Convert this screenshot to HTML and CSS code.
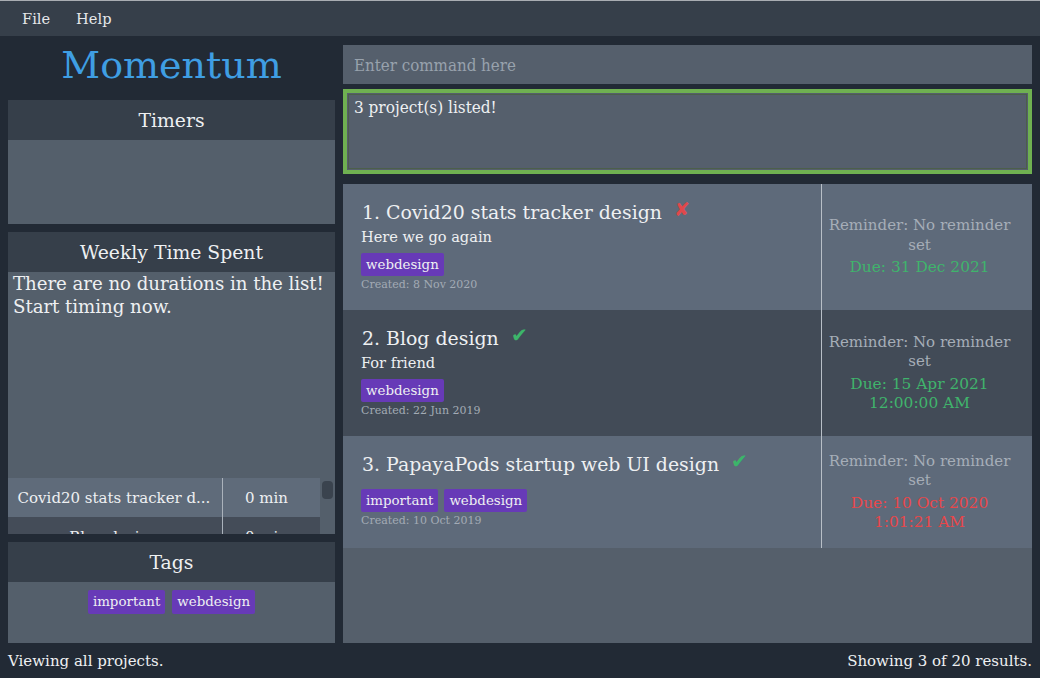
FILE: index.html
```html
<!DOCTYPE html>
<html>
<head>
<meta charset="utf-8">
<link rel="stylesheet" href="styles.css">
</head>
<body>
<div class="app">
  <div class="menubar">
    <span class="menu-item">File</span>
    <span class="menu-item">Help</span>
  </div>
  <div class="main">
    <div class="left">
      <div class="brand">Momentum</div>
      <div class="panel timers">
        <div class="panel-head">Timers</div>
        <div class="panel-body"></div>
      </div>
      <div class="panel weekly">
        <div class="panel-head">Weekly Time Spent</div>
        <div class="panel-body weekly-body">
          <div class="weekly-msg">There are no durations in the list! Start timing now.</div>
          <div class="table-wrap">
            <div class="table">
              <div class="trow light"><div class="tname">Covid20 stats tracker d...</div><div class="tdur">0 min</div></div>
              <div class="trow dark"><div class="tname">Blog design</div><div class="tdur">0 min</div></div>
            </div>
            <div class="scroll"><div class="thumb"></div></div>
          </div>
        </div>
      </div>
      <div class="panel tagsp">
        <div class="panel-head">Tags</div>
        <div class="panel-body tags-body">
          <span class="tag">important</span>
          <span class="tag">webdesign</span>
        </div>
      </div>
    </div>
    <div class="right">
      <div class="command">Enter command here</div>
      <div class="result"><div class="result-inner">3 project(s) listed!</div></div>
      <div class="list">
        <div class="card light">
          <div class="card-main">
            <div class="title">1. Covid20 stats tracker design <span class="mark cross">✘</span></div>
            <div class="desc">Here we go again</div>
            <div class="tags"><span class="tag">webdesign</span></div>
            <div class="created">Created: 8 Nov 2020</div>
          </div>
          <div class="card-side">
            <div class="reminder">Reminder: No reminder set</div>
            <div class="due ok">Due: 31 Dec 2021</div>
          </div>
        </div>
        <div class="card dark">
          <div class="card-main">
            <div class="title">2. Blog design <span class="mark check">✔</span></div>
            <div class="desc">For friend</div>
            <div class="tags"><span class="tag">webdesign</span></div>
            <div class="created">Created: 22 Jun 2019</div>
          </div>
          <div class="card-side">
            <div class="reminder">Reminder: No reminder set</div>
            <div class="due ok">Due: 15 Apr 2021 12:00:00 AM</div>
          </div>
        </div>
        <div class="card light">
          <div class="card-main nodesc">
            <div class="title">3. PapayaPods startup web UI design <span class="mark check">✔</span></div>
            <div class="tags"><span class="tag">important</span><span class="tag">webdesign</span></div>
            <div class="created">Created: 10 Oct 2019</div>
          </div>
          <div class="card-side">
            <div class="reminder">Reminder: No reminder set</div>
            <div class="due late">Due: 10 Oct 2020 1:01:21 AM</div>
          </div>
        </div>
      </div>
    </div>
  </div>
  <div class="status">
    <span>Viewing all projects.</span>
    <span>Showing 3 of 20 results.</span>
  </div>
</div>
</body>
</html>
```

FILE: styles.css
```css
* { box-sizing: border-box; }
html, body { margin: 0; padding: 0; }
body {
  font-family: "DejaVu Serif", "Liberation Serif", serif;
  background: #222a35;
  color: #eef0f2;
  width: 1040px;
  height: 678px;
  overflow: hidden;
}
.app {
  display: flex;
  flex-direction: column;
  height: 678px;
  border-top: 1px solid #a9adb2;
}
.menubar {
  height: 35px;
  background: #363f4a;
  display: flex;
  align-items: center;
  padding-left: 22px;
  gap: 26px;
  font-size: 14.6px;
  color: #e6e8ea;
}
.main {
  display: flex;
  gap: 8px;
  padding: 0 8px;
  height: 607px;
}
.left {
  width: 327px;
  display: flex;
  flex-direction: column;
}
.brand {
  height: 64px;
  display: flex;
  align-items: center;
  justify-content: center;
  font-size: 38px;
  color: #3f9ee3;
  padding-bottom: 7px;
}
.panel {
  display: flex;
  flex-direction: column;
  background: #545f6b;
}
.panel-head {
  height: 40px;
  background: #363f4a;
  display: flex;
  align-items: center;
  justify-content: center;
  font-size: 18.8px;
  color: #eef0f2;
}
.timers { height: 124px; }
.timers .panel-body { flex: 1; }
.weekly { height: 302px; margin-top: 8px; }
.weekly-body {
  flex: 1;
  display: flex;
  flex-direction: column;
  min-height: 0;
}
.weekly-msg {
  flex: 1;
  font-size: 18.2px;
  line-height: 23px;
  padding: 0 0 0 5px;
  letter-spacing: -0.05px;
}
.table-wrap {
  height: 56px;
  display: flex;
  overflow: hidden;
}
.table { width: 312px; }
.trow {
  height: 39px;
  display: flex;
  align-items: center;
  font-size: 15px;
}
.trow.light { background: #5f6b7a; }
.trow.dark { background: #444c58; }
.tname {
  width: 215px;
  border-right: 1px solid #aab2bb;
  height: 100%;
  display: flex;
  align-items: center;
  justify-content: center;
  white-space: nowrap;
  padding-right: 2px;
}
.tdur {
  flex: 1;
  text-align: center;
  padding-right: 10px;
}
.scroll {
  flex: 1;
  background: #545f6b;
  padding: 3px 2px;
}
.thumb {
  height: 18px;
  background: #3a434e;
  border-radius: 4px;
}
.tagsp { height: 101px; margin-top: 8px; }
.tags-body {
  flex: 1;
  display: flex;
  justify-content: center;
  align-items: flex-start;
  gap: 7px;
  padding-top: 8px;
}
.tag {
  display: inline-block;
  background: #673ab7;
  color: #eef0f2;
  font-size: 13.4px;
  line-height: 24px;
  height: 24px;
  padding: 0 5px;
  border-radius: 2px;
}
.right {
  flex: 1;
  display: flex;
  flex-direction: column;
  padding-top: 9px;
}
.command {
  height: 39px;
  background: #555f6c;
  color: #98a2ad;
  font-family: "DejaVu Serif Condensed", "DejaVu Serif", serif;
  font-size: 16.8px;
  display: flex;
  align-items: center;
  padding-left: 11px;
}
.result {
  margin-top: 5px;
  height: 85px;
  border: 4px solid #6fb151;
  background: #555f6c;
  padding: 1px;
}
.result-inner {
  height: 100%;
  border: 1px solid #4c5f4a;
  font-family: "DejaVu Serif Condensed", "DejaVu Serif", serif;
  font-size: 17px;
  line-height: 20px;
  padding: 2px 5px;
  color: #eef0f2;
}
.list {
  margin-top: 10px;
  flex: 1;
  background: #555f6b;
}
.card {
  display: flex;
}
.card.light { background: #5e6a7a; }
.card.dark { background: #424b57; }
.card-main {
  flex: 1;
  padding: 15px 18px 18px 18px;
}
.title {
  font-size: 18.9px;
  line-height: 26px;
  height: 26px;
  color: #eef0f2;
  margin-left: 1px;
  white-space: nowrap;
}
.mark {
  display: inline-block;
  margin-left: 6px;
  line-height: 0;
  vertical-align: 3px;
}
.cross { color: #e0484b; font-size: 19px; }
.check { color: #3cb56a; font-size: 20px; }
.desc {
  font-size: 14.6px;
  line-height: 20px;
  margin-top: 2px;
}
.tags {
  display: flex;
  gap: 6px;
  margin-top: 6px;
}
.nodesc .tags { margin-top: 12px; }
.tags .tag { height: 23px; line-height: 23px; }
.created {
  font-size: 11px;
  color: #a3abb5;
  margin-top: 2px;
  line-height: 14px;
}
.card-side {
  width: 211px;
  border-left: 1px solid #b8bfc7;
  display: flex;
  flex-direction: column;
  justify-content: center;
  align-items: center;
  text-align: center;
  padding: 15.5px 19px 15.5px 4px;
  font-size: 15px;
  line-height: 19.5px;
}
.reminder { color: #a6aeb8; }
.due { margin-top: 3px; font-size: 15.4px; }
.due.ok { color: #40b46c; }
.due.late { color: #e8474a; }
.status {
  flex: 1;
  display: flex;
  justify-content: space-between;
  align-items: center;
  padding: 0 8px 0 8px;
  font-size: 15px;
  color: #eef0f2;
}
```
